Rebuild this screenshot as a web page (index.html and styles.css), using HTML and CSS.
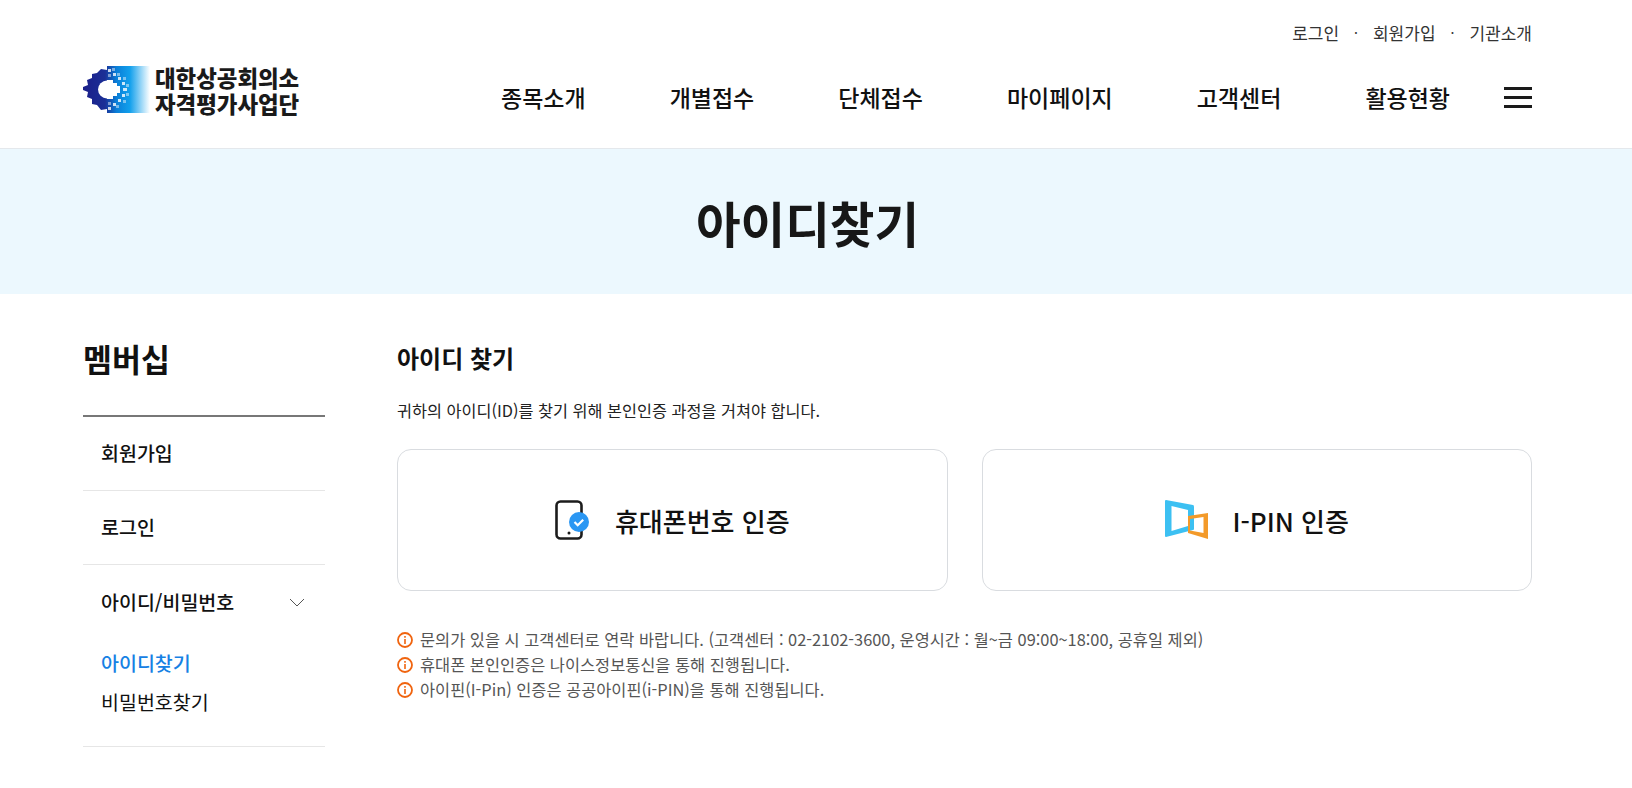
FILE: index.html
```html
<!DOCTYPE html>
<html lang="ko">
<head>
    <meta charset="UTF-8">
    <title>아이디찾기</title>
    <link rel="stylesheet" href="styles.css">
</head>
<body>
    <header class="header">
        <div class="wrap">
            <ul class="util">
                <li>로그인</li>
                <li class="dot">·</li>
                <li>회원가입</li>
                <li class="dot">·</li>
                <li>기관소개</li>
            </ul>
            <div class="header-row">
                <a class="logo">
                    <svg class="logo-mark" width="67" height="47" viewBox="0 0 67 47">
                        <defs>
                            <linearGradient id="logoGrad" x1="0" x2="1" y1="0" y2="0">
                                <stop offset="0" stop-color="#1b1f8a"/>
                                <stop offset="0.33" stop-color="#1b2f96"/>
                                <stop offset="0.5" stop-color="#0a7fd8"/>
                                <stop offset="0.7" stop-color="#12a0ec"/>
                                <stop offset="1" stop-color="#ffffff"/>
                            </linearGradient>
                        </defs>
                        <path fill="url(#logoGrad)" d="M24 0H67V47H24V43L18 44L14 39L9 38V33L4 31L5 26L0 24L0 21L5 19L4 14L9 12V8L14 7L18 3L24 4Z"/>
                        <circle cx="24" cy="23.5" r="9" fill="#fff"/>
                        <path fill="#fff" d="M24 14h6v3h4v3h3v7h-3v3h-4v3h-6z"/>
                        <path fill="#fff" opacity=".8" d="M25 3h3v3h-3zM30 7h3v3h-3zM35 11h3v3h-3zM39 16h3v3h-3zM40 22h4v3h-4zM39 28h3v3h-3zM35 33h3v3h-3zM30 37h3v3h-3zM25 41h3v3h-3z"/>
                        <path fill="#fff" opacity=".45" d="M29 2h3v3h-3zM34 7h3v3h-3zM40 11h3v3h-3zM43 18h3v3h-3zM43 27h3v3h-3zM40 34h3v3h-3zM33 39h3v3h-3zM25 8h3v3h-3zM25 36h3v3h-3z"/>
                    </svg>
                    <span class="logo-text">대한상공회의소<br>자격평가사업단</span>
                </a>
                <nav class="gnb">
                    <a>종목소개</a>
                    <a>개별접수</a>
                    <a>단체접수</a>
                    <a>마이페이지</a>
                    <a>고객센터</a>
                    <a>활용현황</a>
                </nav>
                <button class="menu-btn"><span></span><span></span><span></span></button>
            </div>
        </div>
    </header>

    <section class="banner">
        <h1>아이디찾기</h1>
    </section>

    <div class="wrap content">
        <aside class="side">
            <h2>멤버십</h2>
            <ul class="side-menu">
                <li>회원가입</li>
                <li>로그인</li>
                <li class="open">
                    <div class="side-head">
                        아이디/비밀번호
                        <svg width="16" height="9" viewBox="0 0 16 9"><path d="M1 1l7 7 7-7" fill="none" stroke="#555" stroke-width="1"/></svg>
                    </div>
                    <div class="side-sub">
                        <a class="on">아이디찾기</a>
                        <a>비밀번호찾기</a>
                    </div>
                </li>
            </ul>
        </aside>

        <main class="main">
            <h3>아이디 찾기</h3>
            <p class="desc">귀하의 아이디(ID)를 찾기 위해 본인인증 과정을 거쳐야 합니다.</p>

            <div class="cards">
                <a class="card">
                    <svg width="36" height="40" viewBox="0 0 36 40">
                        <rect x="1.5" y="1.5" width="25" height="37" rx="4" fill="none" stroke="#1c1c1c" stroke-width="2.6"/>
                        <circle cx="14" cy="33" r="1.5" fill="#1c1c1c"/>
                        <circle cx="24" cy="22" r="10" fill="#2b97f3"/>
                        <path d="M19.5 22l3.2 3.2 5.5-5.5" fill="none" stroke="#fff" stroke-width="2.2"/>
                    </svg>
                    <span>휴대폰번호 인증</span>
                </a>
                <a class="card">
                    <svg width="44" height="40" viewBox="0 0 44 40">
                        <path fill="#3cc0f2" fill-rule="evenodd" d="M1 0L28 5Q29 5 29 7V29Q29 30 28 30L1 37Q0 37 0 36V1Q0 0 1 0ZM6.5 6V31L23 26V10Z"/>
                        <path fill="#f39a2a" fill-rule="evenodd" d="M23 16L43 13V39L23 33ZM25 19V30.5L38.5 33V17Z"/>
                    </svg>
                    <span>I-PIN 인증</span>
                </a>
            </div>

            <ul class="notes">
                <li>
                    <svg class="info" width="16" height="16" viewBox="0 0 16 16"><circle cx="8" cy="8" r="7" fill="none" stroke="#f0640f" stroke-width="1.8"/><path d="M8 7v5M8 4v1.8" stroke="#f0640f" stroke-width="1.6"/></svg>
                    문의가 있을 시 고객센터로 연락 바랍니다. (고객센터 : 02-2102-3600, 운영시간 : 월~금 09:00~18:00, 공휴일 제외)
                </li>
                <li>
                    <svg class="info" width="16" height="16" viewBox="0 0 16 16"><circle cx="8" cy="8" r="7" fill="none" stroke="#f0640f" stroke-width="1.8"/><path d="M8 7v5M8 4v1.8" stroke="#f0640f" stroke-width="1.6"/></svg>
                    휴대폰 본인인증은 나이스정보통신을 통해 진행됩니다.
                </li>
                <li>
                    <svg class="info" width="16" height="16" viewBox="0 0 16 16"><circle cx="8" cy="8" r="7" fill="none" stroke="#f0640f" stroke-width="1.8"/><path d="M8 7v5M8 4v1.8" stroke="#f0640f" stroke-width="1.6"/></svg>
                    아이핀(I-Pin) 인증은 공공아이핀(i-PIN)을 통해 진행됩니다.
                </li>
            </ul>
        </main>
    </div>
</body>
</html>
```

FILE: styles.css
```css
* {
    box-sizing: border-box;
}
body {
    margin: 0;
    background-color: #fff;
    color: #111;
    font-family: "Noto Sans CJK KR", "Noto Sans", sans-serif;
    overflow: hidden;
}
ul {
    list-style: none;
    margin: 0;
    padding: 0;
}
.wrap {
    width: 1449px;
    margin-left: 83px;
}

/* header */
.header {
    height: 149px;
    padding-top: 20px;
    border-bottom: 1px solid #e4e8ec;
}
.util {
    display: flex;
    justify-content: flex-end;
    align-items: center;
    gap: 15px;
    height: 24px;
    font-size: 17px;
    color: #333;
}
.util .dot {
    font-size: 14px;
}
.header-row {
    display: flex;
    align-items: center;
    margin-top: 21px;
    height: 64px;
}
.logo {
    display: flex;
    align-items: center;
    gap: 5px;
    width: 418px;
    margin-bottom: 15px;
}
.logo-text {
    font-size: 22.4px;
    font-weight: 900;
    line-height: 26px;
    color: #1a1a1a;
}
.gnb {
    display: flex;
    gap: 84px;
    font-size: 23px;
    font-weight: 500;
}
.menu-btn {
    margin-left: auto;
    width: 28px;
    height: 21px;
    padding: 0;
    border: 0;
    background: none;
    display: flex;
    flex-direction: column;
    justify-content: space-between;
}
.menu-btn span {
    display: block;
    height: 3px;
    background-color: #1a1a1a;
}

/* banner, centred as if a 17px scrollbar were there */
.banner {
    height: 145px;
    padding-right: 17px;
    background-color: #ecf8fe;
    display: flex;
    align-items: center;
    justify-content: center;
}
.banner h1 {
    margin: 0;
    font-size: 48.5px;
    font-weight: 700;
    color: #171717;
}

/* side menu */
.content {
    display: flex;
    gap: 72px;
}
.side {
    width: 242px;
    flex: none;
    padding-top: 42px;
}
.side h2 {
    margin: 0;
    font-size: 31.5px;
    font-weight: 700;
    line-height: 44px;
    padding-bottom: 35px;
    border-bottom: 2px solid #777;
}
.side-menu li {
    border-bottom: 1px solid #e6e6e6;
    font-size: 19.5px;
    font-weight: 500;
    padding: 0 18px;
    height: 74px;
    line-height: 72px;
}
.side-menu li.open {
    height: 182px;
}
.side-head {
    display: flex;
    justify-content: space-between;
    align-items: center;
    height: 74px;
    padding-right: 2px;
}
.side-sub {
    display: flex;
    flex-direction: column;
    gap: 11px;
    margin-top: 10px;
    font-weight: 400;
}
.side-sub a {
    line-height: 28px;
}
.side-sub .on {
    color: #1681e4;
    font-weight: 500;
}

/* main */
.main {
    flex: 1;
    padding-top: 48px;
}
.main h3 {
    margin: 0;
    font-size: 24px;
    font-weight: 700;
    line-height: 32px;
}
.desc {
    margin: 24px 0 0;
    font-size: 16.3px;
    line-height: 24px;
    color: #222;
}
.cards {
    display: flex;
    gap: 34px;
    margin-top: 27px;
}
.card {
    flex: 1;
    height: 142px;
    border: 1px solid #d9dce0;
    border-radius: 14px;
    display: flex;
    align-items: center;
    justify-content: center;
    gap: 24px;
    font-size: 26px;
    font-weight: 500;
}
.notes {
    margin-top: 36px;
    font-size: 16.4px;
    line-height: 25px;
    color: #555;
}
.notes li {
    display: flex;
    align-items: center;
    gap: 7px;
}
.info {
    flex: none;
}
```
